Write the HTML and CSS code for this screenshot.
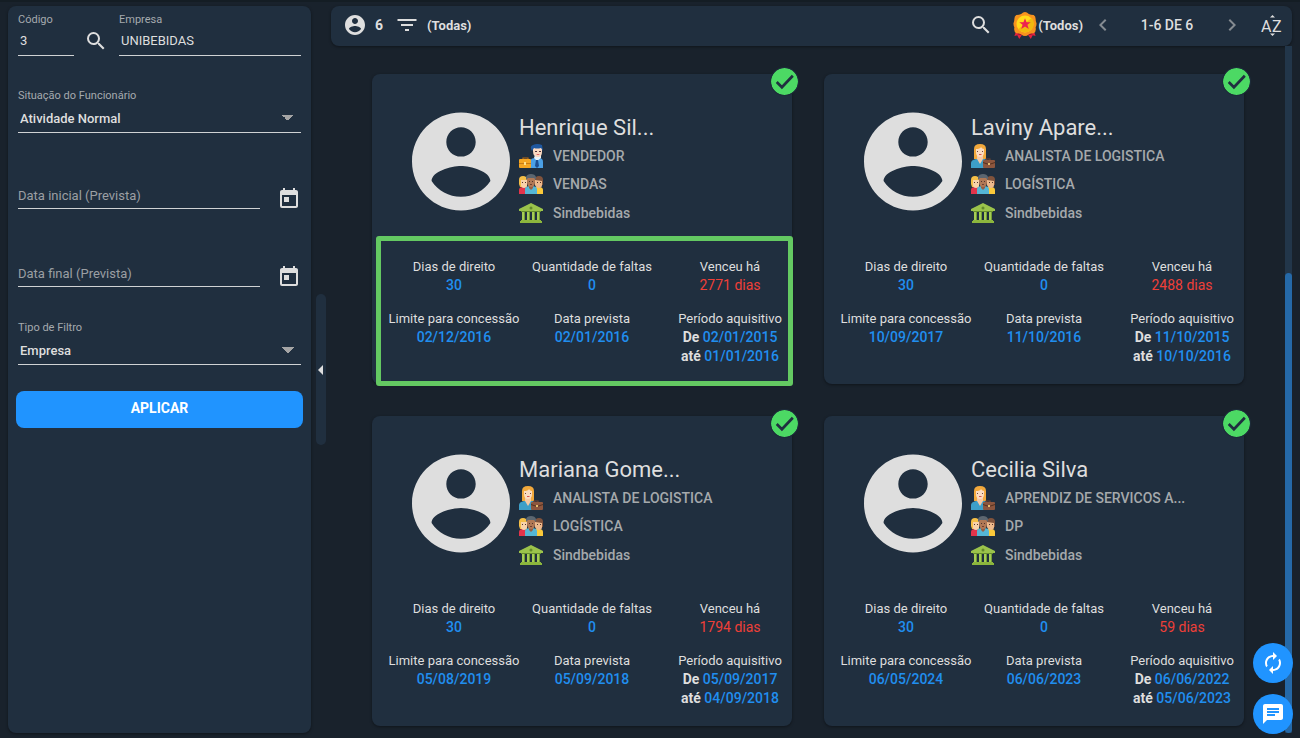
FILE: index.html
```
<!DOCTYPE html>
<html lang="pt-BR">
<head>
<meta charset="utf-8">
<meta name="viewport" content="width=device-width, initial-scale=1">
<title>Férias</title>
<link rel="stylesheet" href="styles.css">
</head>
<body>
<svg class="sprite" aria-hidden="true">
  <symbol id="account" viewBox="2 2 20 20"><path d="M12 2C6.48 2 2 6.48 2 12s4.48 10 10 10 10-4.48 10-10S17.52 2 12 2zm0 3c1.66 0 3 1.34 3 3s-1.34 3-3 3-3-1.34-3-3 1.34-3 3-3zm0 14.2c-2.5 0-4.71-1.28-6-3.22.03-1.99 4-3.08 6-3.08 1.99 0 5.97 1.09 6 3.08-1.29 1.94-3.5 3.22-6 3.22z"/></symbol>
  <symbol id="search" viewBox="0 0 24 24"><path d="M15.5 14h-.79l-.28-.27A6.471 6.471 0 0 0 16 9.5 6.5 6.5 0 1 0 9.5 16c1.61 0 3.09-.59 4.23-1.57l.27.28v.79l5 4.99L20.49 19l-4.99-5zm-6 0C7.01 14 5 11.99 5 9.5S7.01 5 9.5 5 14 7.01 14 9.5 11.99 14 9.5 14z"/></symbol>
  <symbol id="calendar" viewBox="0 0 24 24"><path d="M19 3h-1V1h-2v2H8V1H6v2H5c-1.11 0-1.99.9-1.99 2L3 19a2 2 0 0 0 2 2h14c1.1 0 2-.9 2-2V5c0-1.1-.9-2-2-2zm0 16H5V8h14v11zM7 10h5v5H7z"/></symbol>
  <symbol id="check" viewBox="0 0 26 26"><circle cx="13" cy="13" r="13" fill="#4cd964"/><path d="M5.500 13.500l5 5L21 7.500" fill="none" stroke="#202f40" stroke-width="2.600"/></symbol>
  <symbol id="seller" viewBox="0 0 24 24">
    <path d="M11 24v-7q1-3 5-3h4q4 0 4 4v6z" fill="#4ba0e6"/><path d="M15 14l3 3 4-3v-3h-6z" fill="#e9f3fa"/><path d="M17 16h2l1 6-2 2-2-2z" fill="#1e4f92"/>
    <path d="M14 4h9v4q0 5-4 5-5 0-5-6z" fill="#fbd9c0"/><path d="M13 7q-3-5 1-6 4-2 9 0l1 6-2-3q-4 1-7 0z" fill="#1f58a0"/><path d="M16 7h2v1h-2zm4 0h2v1h-2z" fill="#51333a"/><path d="M17 10h4l-2 1z" fill="#d9434e"/>
    <path d="M4 16v-2h5v2" fill="none" stroke="#b56a13" stroke-width="1.200"/><rect y="15" width="12" height="9" rx="1" fill="#f5a623"/><path d="M0 19h12v1H0z" fill="#c97c14"/><path d="M5 18h2v3H5z" fill="#ffe08a"/>
  </symbol>
  <symbol id="analyst" viewBox="0 0 24 24">
    <path d="M3 15V5q0-5 6-5t6 5v10z" fill="#f2a93c"/><path d="M0 24v-5q0-3 5-4h8q5 1 5 4v5z" fill="#3d9fc8"/><path d="M6 11h6v4l-3 5-3-5z" fill="#f5c9a5"/><path d="M5 5q4 0 5-2 1 2 3 2v3q0 5-4 5t-4-5z" fill="#fbdcc0"/><path d="M6 7h1v1H6zm5 0h1v1h-1z" fill="#70463a"/><path d="M8 10h3l-1 1H8z" fill="#d65252"/>
    <path d="M15 17v-2h4v2" fill="none" stroke="#704332" stroke-width="1.200"/><rect x="12" y="16" width="12" height="8" rx="1" fill="#8d563e"/><path d="M12 18l6 2 6-2v1l-6 2-6-2z" fill="#54301f"/><path d="M17 19h2v2h-2z" fill="#e7bd70"/>
  </symbol>
  <symbol id="team" viewBox="0 0 24 20">
    <path d="M0 20v-4q0-3 4-3h4v7z" fill="#e3344b"/><path d="M16 20v-7h4q4 0 4 3v4z" fill="#fbc93a"/><path d="M0 10V6q0-4 4-4t4 4v7H1z" fill="#f5bf47"/><path d="M2 6h6v5q0 3-3 3t-3-3z" fill="#f8d2aa"/><path d="M16 10V6q0-4 4-4t4 4v5z" fill="#80533c"/><path d="M16 6l7 1v4q0 3-3 3t-4-3z" fill="#edb98c"/>
    <path d="M6 20v-5q0-3 6-3t6 3v5z" fill="#55b6d5"/><path d="M10 11h4v3l-2 2-2-2z" fill="#985e43"/><path d="M8 4h8v4q0 5-4 5T8 8z" fill="#b07855"/><path d="M7 6V3q1-3 5-3t5 3v3l-2-2H9z" fill="#5c6670"/><path d="M3 8h1v1H3zm3 0h1v1H6zm4-1h1v1h-1zm3 0h1v1h-1zm5 1h1v1h-1zm3 0h1v1h-1z" fill="#51352e"/><path d="M11 10h2v1h-2z" fill="#713f32"/>
  </symbol>
  <symbol id="bank" viewBox="0 0 24 20"><path d="M12 0l12 6v2H0V6z" fill="#9bc34b"/><path d="M2 8h20v1H2z" fill="#668d2d"/><path d="M3 9h3v8H3zm5 0h3v8H8zm5 0h3v8h-3zm5 0h3v8h-3z" fill="#a5cc55"/><path d="M5 9h1v8H5zm5 0h1v8h-1zm5 0h1v8h-1zm5 0h1v8h-1z" fill="#739d35"/><path d="M2 17h20v1h1v2H1v-2h1z" fill="#8cb63d"/><circle cx="12" cy="5" r="1.500" fill="#648a2c"/></symbol>
</svg>

<form class="panel filters">
  <div class="company">
    <div class="field code"><label for="codigo">Código</label><input id="codigo" value="3"></div>
    <button class="icon-btn" type="button" aria-label="Pesquisar empresa"><svg class="i24"><use href="#search"/></svg></button>
    <div class="field grow"><label for="empresa">Empresa</label><input id="empresa" value="UNIBEBIDAS"></div>
  </div>
  <div class="field situation"><label for="situacao">Situação do Funcionário</label><select id="situacao"><option>Atividade Normal</option></select></div>
  <div class="date first"><input aria-label="Data inicial (Prevista)" placeholder="Data inicial (Prevista)"><button class="icon-btn" type="button" aria-label="Escolher data inicial"><svg class="i24"><use href="#calendar"/></svg></button></div>
  <div class="date"><input aria-label="Data final (Prevista)" placeholder="Data final (Prevista)"><button class="icon-btn" type="button" aria-label="Escolher data final"><svg class="i24"><use href="#calendar"/></svg></button></div>
  <div class="field kind"><label for="tipo">Tipo de Filtro</label><select id="tipo"><option>Empresa</option></select></div>
  <button class="apply" type="button">APLICAR</button>
</form>

<button class="handle" type="button" aria-label="Recolher filtros"></button>

<main class="main">
  <header class="panel toolbar">
    <svg class="i20"><use href="#account"/></svg>
    <span class="count">6</span>
    <button class="tool filter" type="button"><svg class="i24" viewBox="0 0 24 24"><path d="M10 18h4v-2h-4v2zM2.500 6v2h19V6h-19zM6 13h12v-2H6v2z"/></svg>(Todas)</button>
    <button class="icon-btn find" type="button" aria-label="Pesquisar"><svg class="i24"><use href="#search"/></svg></button>
    <button class="tool medal" type="button"><svg class="badge" viewBox="0 0 24 28">
      <path d="M3 19l-2 6 3-1 2 4 4-6zm18 0l2 6-3-1-2 4-4-6z" fill="#e3223f"/><path d="M5 21l-1 2 4 1 1-2zm14 0l1 2-4 1-1-2z" fill="#9c1534"/>
      <path d="M12 0q2 0 4 2 2 1 5 1 2 1 2 4 0 3 1 5 0 2-1 4 1 4-2 6-3 0-5 1-2 2-4 2t-4-2q-2-1-5-1-3-2-2-6-1-2-1-4 1-2 1-5 0-3 2-4 3 0 5-1 2-2 4-2z" fill="#f7931e"/><circle cx="12" cy="12.500" r="8.800" fill="#ffd91a"/><path d="M5 18a8.800 8.800 0 0 0 14-12z" fill="#f2b90f"/><path d="M12 6.500l1.600 4h4.400l-3.500 2.700 1.400 4.300L12 15l-3.900 2.500 1.400-4.300L6 10.500h4.400z" fill="#ed2350"/></svg>(Todos)</button>
    <button class="icon-btn prev" type="button" aria-label="Anterior"><svg class="i24" viewBox="0 0 24 24"><path d="M15.410 7.410L14 6l-6 6 6 6 1.410-1.410L10.830 12z"/></svg></button>
    <span class="range">1-6 DE 6</span>
    <button class="icon-btn next" type="button" aria-label="Próxima"><svg class="i24" viewBox="0 0 24 24"><path d="M10 6L8.590 7.410 13.170 12l-4.580 4.590L10 18l6-6z"/></svg></button>
    <button class="icon-btn sort" type="button" aria-label="Ordenar"><svg class="i24" viewBox="0 0 24 24"><path d="M10 4.500h5L12.500 2zM10 20.500h5L12.500 23z"/><text x="1" y="19">A</text><text x="12" y="19">Z</text></svg></button>
  </header>

  <div class="content">
    <div class="cards">
      <article class="panel card">
        <svg class="status"><use href="#check"/></svg>
        <div class="person"><svg class="avatar"><use href="#account"/></svg>
          <div class="info"><h2>Henrique Sil...</h2>
            <p><svg class="i24"><use href="#seller"/></svg>VENDEDOR</p><p><svg class="ico"><use href="#team"/></svg>VENDAS</p><p><svg class="ico"><use href="#bank"/></svg>Sindbebidas</p></div></div>
        <dl class="stats">
          <div><dt>Dias de direito</dt><dd>30</dd></div><div><dt>Quantidade de faltas</dt><dd>0</dd></div><div><dt>Venceu há</dt><dd class="late">2771 dias</dd></div>
          <div><dt>Limite para concessão</dt><dd>02/12/2016</dd></div><div><dt>Data prevista</dt><dd>02/01/2016</dd></div><div><dt>Período aquisitivo</dt><dd><b>De</b> 02/01/2015</dd><dd><b>até</b> 01/01/2016</dd></div>
        </dl>
        <div class="highlight"></div>
      </article>
      <article class="panel card">
        <svg class="status"><use href="#check"/></svg>
        <div class="person"><svg class="avatar"><use href="#account"/></svg>
          <div class="info"><h2>Laviny Apare...</h2>
            <p><svg class="i24"><use href="#analyst"/></svg>ANALISTA DE LOGISTICA</p><p><svg class="ico"><use href="#team"/></svg>LOGÍSTICA</p><p><svg class="ico"><use href="#bank"/></svg>Sindbebidas</p></div></div>
        <dl class="stats">
          <div><dt>Dias de direito</dt><dd>30</dd></div><div><dt>Quantidade de faltas</dt><dd>0</dd></div><div><dt>Venceu há</dt><dd class="late">2488 dias</dd></div>
          <div><dt>Limite para concessão</dt><dd>10/09/2017</dd></div><div><dt>Data prevista</dt><dd>11/10/2016</dd></div><div><dt>Período aquisitivo</dt><dd><b>De</b> 11/10/2015</dd><dd><b>até</b> 10/10/2016</dd></div>
        </dl>
      </article>
      <article class="panel card">
        <svg class="status"><use href="#check"/></svg>
        <div class="person"><svg class="avatar"><use href="#account"/></svg>
          <div class="info"><h2>Mariana Gome...</h2>
            <p><svg class="i24"><use href="#analyst"/></svg>ANALISTA DE LOGISTICA</p><p><svg class="ico"><use href="#team"/></svg>LOGÍSTICA</p><p><svg class="ico"><use href="#bank"/></svg>Sindbebidas</p></div></div>
        <dl class="stats">
          <div><dt>Dias de direito</dt><dd>30</dd></div><div><dt>Quantidade de faltas</dt><dd>0</dd></div><div><dt>Venceu há</dt><dd class="late">1794 dias</dd></div>
          <div><dt>Limite para concessão</dt><dd>05/08/2019</dd></div><div><dt>Data prevista</dt><dd>05/09/2018</dd></div><div><dt>Período aquisitivo</dt><dd><b>De</b> 05/09/2017</dd><dd><b>até</b> 04/09/2018</dd></div>
        </dl>
      </article>
      <article class="panel card">
        <svg class="status"><use href="#check"/></svg>
        <div class="person"><svg class="avatar"><use href="#account"/></svg>
          <div class="info"><h2>Cecilia Silva</h2>
            <p><svg class="i24"><use href="#analyst"/></svg>APRENDIZ DE SERVICOS A...</p><p><svg class="ico"><use href="#team"/></svg>DP</p><p><svg class="ico"><use href="#bank"/></svg>Sindbebidas</p></div></div>
        <dl class="stats">
          <div><dt>Dias de direito</dt><dd>30</dd></div><div><dt>Quantidade de faltas</dt><dd>0</dd></div><div><dt>Venceu há</dt><dd class="late">59 dias</dd></div>
          <div><dt>Limite para concessão</dt><dd>06/05/2024</dd></div><div><dt>Data prevista</dt><dd>06/06/2023</dd></div><div><dt>Período aquisitivo</dt><dd><b>De</b> 06/06/2022</dd><dd><b>até</b> 05/06/2023</dd></div>
        </dl>
      </article>
    </div>
    <div class="track"><div class="thumb"></div></div>
  </div>
</main>

<div class="fabs">
  <button type="button" aria-label="Atualizar"><svg class="i24" viewBox="0 0 24 24"><path d="M12 6v3l4-4-4-4v3c-4.420 0-8 3.580-8 8 0 1.570.46 3.030 1.240 4.260L6.700 14.800A5.870 5.870 0 0 1 6 12c0-3.310 2.690-6 6-6zm6.760 1.740L17.300 9.200c.44.84.7 1.790.7 2.800 0 3.310-2.690 6-6 6v-3l-4 4 4 4v-3c4.420 0 8-3.580 8-8 0-1.570-.46-3.030-1.240-4.260z"/></svg></button>
  <button type="button" aria-label="Mensagens"><svg class="i24" viewBox="0 0 24 24"><path d="M20 2H4c-1.100 0-1.990.9-1.990 2L2 22l4-4h14c1.100 0 2-.9 2-2V4c0-1.100-.9-2-2-2zM6 9h12v2H6V9zm8 5H6v-2h8v2zm4-6H6V6h12v2z"/></svg></button>
</div>
</body>
</html>
```
FILE: styles.css
```
* { box-sizing: border-box; }
body {
  margin: 0;
  height: 100vh;
  display: flex;
  padding: 4px 8px 5px;
  border-top: 2px solid #141d24;
  background: #19222c;
  color: #dedede;
  font-family: Roboto, "Liberation Sans", sans-serif;
  font-size: 14px;
  overflow: hidden;
}
svg { fill: currentColor; flex: none; }
button, input, select { font: inherit; color: inherit; background: none; border: 0; padding: 0; margin: 0; }
button { cursor: pointer; }
.sprite { position: absolute; width: 0; height: 0; }
.i24 { width: 24px; height: 24px; display: block; }
.i20 { width: 20px; height: 20px; }
.ico { width: 24px; height: 20px; }
.panel { background: #202f3f; border-radius: 8px; box-shadow: 0 1px 3px rgba(0, 0, 0, .4); }

.filters { width: 303px; flex: none; padding: 6px 10px; font-size: 13px; }
.company { display: flex; align-items: flex-end; }
.field { display: flex; flex-direction: column; }
.field label { font-size: 11px; line-height: 16px; color: #a5aaae; }
.field input, .field select, .date input {
  width: 100%;
  height: 29px;
  padding: 0 2px;
  border-bottom: 1px solid #d0d2d4;
  border-radius: 0;
  outline: none;
}
.company .field input { height: 28px; padding-bottom: 2px; }
.company .icon-btn { margin: 0 11px 3px 10px; }
.code { width: 56px; }
.grow { flex: 1; }
.field select {
  appearance: none;
  font-weight: 500;
  background: linear-gradient(to bottom right, #a5a5a5 50%, transparent 50%) no-repeat right 7px center / 6px 6px,
    linear-gradient(to bottom left, #a5a5a5 50%, transparent 50%) no-repeat right 13px center / 6px 6px;
}
.situation { margin-top: 32px; }
.kind { margin-top: 33px; }
.date { display: flex; align-items: flex-start; justify-content: space-between; margin-top: 52px; height: 26px; }
.date.first { margin-top: 50px; }
.date input { width: 242px; height: 26px; padding: 0; }
.date .icon-btn { margin-top: 4px; }
.date input::placeholder { color: #9b9fa3; opacity: 1; }
.apply {
  width: calc(100% + 4px);
  height: 37px;
  margin: 26px -2px 0;
  padding-bottom: 3px;
  border-radius: 8px;
  background: #2094ff;
  color: #fff;
  font-size: 14px;
  font-weight: 700;
}
.handle {
  width: 10px;
  height: 151px;
  margin: 0 5px;
  padding-right: 2px;
  flex: none;
  align-self: center;
  border-radius: 5px;
  background: #202f3f;
  display: flex;
  align-items: center;
  justify-content: center;
}
.handle::before { content: ""; border: 5px solid transparent; border-right-color: #dedede; border-left: 0; }

.main { flex: 1; min-width: 0; display: flex; flex-direction: column; }
.toolbar { display: flex; align-items: center; flex: none; height: 40px; padding: 0 8px 2px 14px; font-weight: 700; }
.count { margin: 0 12px 0 10px; }
.tool { display: flex; align-items: center; font-size: 13px; font-weight: 700; }
.filter { gap: 8px; }
.find { margin-left: auto; }
.medal { margin-left: 20px; gap: 1px; }
.badge { width: 24px; height: 27px; }
.prev, .next { color: #858b91; }
.prev { margin: 0 5px 0 8px; }
.range { width: 94px; text-align: center; font-weight: 500; }
.next { margin: 0 16px 0 6px; }
.sort text { font-size: 16px; font-weight: 400; }

.content { flex: 1; min-height: 0; display: flex; }
.cards {
  flex: 1;
  display: grid;
  grid-template-columns: repeat(2, minmax(0, 420px));
  align-content: start;
  justify-content: center;
  gap: 32px;
  padding-top: 28px;
}
.track { width: 7px; background: #22364a; display: flex; flex-direction: column; justify-content: flex-end; }
.thumb { height: 67%; background: #2569a8; border-radius: 4px; }

.card { position: relative; padding: 38px 0 18px; }
.status { position: absolute; top: -7px; right: -7px; width: 29px; height: 29px; padding: 1px; border-radius: 50%; background: #1d2c3a; }
.person { display: flex; gap: 9px; padding-left: 40px; }
.avatar { width: 98px; height: 99px; }
.info { padding-top: 2px; min-width: 0; }
h2 { margin: 0; font-size: 22px; line-height: 28px; font-weight: 400; }
.info p { display: flex; align-items: center; gap: 10px; height: 28px; margin: 0; font-weight: 500; color: #a5a9ac; white-space: nowrap; }
.info p:last-child { height: 30px; }
.stats { display: grid; grid-template-columns: repeat(3, 1fr); row-gap: 14px; margin: 29px -7px 0 13px; text-align: center; line-height: 19px; white-space: nowrap; }
dt { font-size: 13px; }
dd { margin: 0; color: #208eef; font-weight: 500; }
dd b { color: #dedede; font-weight: 700; }
dd.late { color: #ef3f38; font-weight: 400; }
.highlight { position: absolute; inset: 162px -1px -2px 4px; border: 5px solid #64c962; border-radius: 3px; pointer-events: none; }

.fabs { position: fixed; right: 7px; bottom: 4px; display: flex; flex-direction: column; gap: 11px; }
.fabs button { width: 40px; height: 40px; border-radius: 50%; background: #2094ff; color: #fff; display: flex; align-items: center; justify-content: center; }
```
